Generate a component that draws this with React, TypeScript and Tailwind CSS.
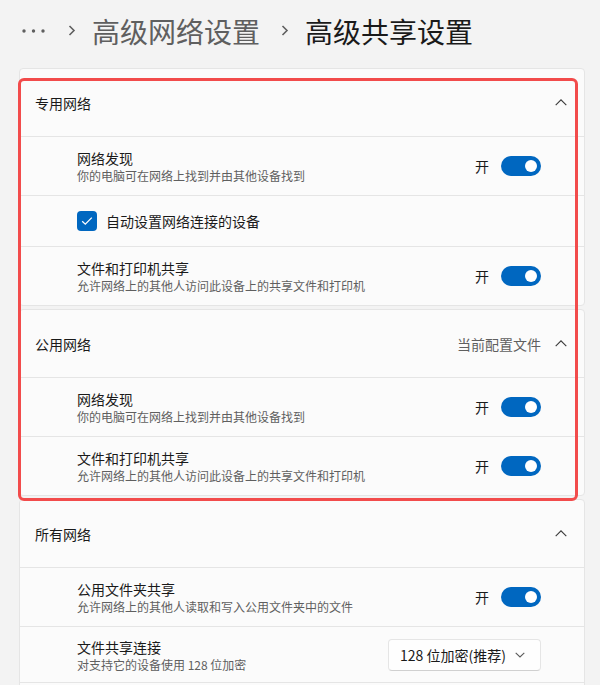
import React from "react";

const font = { fontFamily: '"Noto Sans CJK SC", "Noto Sans", sans-serif' };

function ChevronUp() {
  return (
    <svg width="12" height="7" viewBox="0 0 12 7" className="block">
      <path d="M0.7 6.2 L6 0.9 L11.3 6.2" fill="none" stroke="#3a3a3a" strokeWidth="1.1" />
    </svg>
  );
}

function ChevronDown() {
  return (
    <svg width="10" height="6" viewBox="0 0 10 6" className="block">
      <path d="M0.7 0.8 L5 5 L9.3 0.8" fill="none" stroke="#5a5a5a" strokeWidth="1.1" />
    </svg>
  );
}

function BreadChevron() {
  return (
    <svg width="8" height="11" viewBox="0 0 8 11" className="block">
      <path d="M1.5 1 L6 5.5 L1.5 10" fill="none" stroke="#5f5f5f" strokeWidth="1.6" />
    </svg>
  );
}

function Toggle() {
  return (
    <div className="flex items-center gap-[12px]">
      <span className="text-[14px] leading-[20px] text-[#1a1a1a]">开</span>
      <div className="w-[40px] h-[20px] rounded-full bg-[#0067c0] flex items-center justify-end pr-[4px]">
        <div className="w-[12px] h-[12px] rounded-full bg-white" />
      </div>
    </div>
  );
}

function Header({ title, extra }: { title: string; extra?: string }) {
  return (
    <div className="h-[67px] flex items-center pl-[15px] pr-[17px]">
      <span className="flex-1 text-[14px] leading-[20px] text-[#1a1a1a]">{title}</span>
      {extra && <span className="text-[14px] leading-[20px] text-[#5f5f5f] mr-[14px]">{extra}</span>}
      <ChevronUp />
    </div>
  );
}

function ToggleRow({ title, desc }: { title: string; desc: string }) {
  return (
    <div className="h-[59px] border-t border-[#e5e5e5] flex items-center pl-[57px] pr-[43px]">
      <div className="flex-1 flex flex-col">
        <span className="text-[14px] leading-[20px] text-[#1a1a1a]">{title}</span>
        <span className="text-[12px] leading-[16px] text-[#5f5f5f]">{desc}</span>
      </div>
      <Toggle />
    </div>
  );
}

export default function App() {
  return (
    <div className="w-[600px] h-[685px] overflow-hidden bg-[#f3f3f3]" style={font}>
      <div className="h-[61px] flex items-center pl-[22px]">
        <svg width="24" height="4" viewBox="0 0 24 4" className="block">
          <circle cx="2" cy="2" r="1.7" fill="#5f5f5f" />
          <circle cx="11.5" cy="2" r="1.7" fill="#5f5f5f" />
          <circle cx="21" cy="2" r="1.7" fill="#5f5f5f" />
        </svg>
        <div className="ml-[22px]">
          <BreadChevron />
        </div>
        <span className="ml-[16px] text-[28px] leading-[36px] text-[#5f5f5f]">高级网络设置</span>
        <div className="ml-[21px]">
          <BreadChevron />
        </div>
        <span className="ml-[16px] text-[28px] leading-[36px] text-[#1a1a1a]">高级共享设置</span>
      </div>

      <div className="relative mt-[7px] ml-[19px] mr-[15px] flex flex-col gap-[3px]">
        <div className="bg-[#fbfbfb] border border-[#e5e5e5] rounded-[4px]">
          <Header title="专用网络" />
          <ToggleRow title="网络发现" desc="你的电脑可在网络上找到并由其他设备找到" />
          <div className="h-[51px] border-t border-[#e5e5e5] flex items-center pl-[57px]">
            <div className="w-[20px] h-[20px] rounded-[4px] bg-[#0067c0] flex items-center justify-center">
              <svg width="12" height="10" viewBox="0 0 12 10" className="block">
                <path d="M1.2 5.2 L4.3 8.2 L10.8 1.6" fill="none" stroke="#ffffff" strokeWidth="1.3" />
              </svg>
            </div>
            <span className="ml-[9px] text-[14px] leading-[20px] text-[#1a1a1a]">自动设置网络连接的设备</span>
          </div>
          <ToggleRow title="文件和打印机共享" desc="允许网络上的其他人访问此设备上的共享文件和打印机" />
        </div>

        <div className="bg-[#fbfbfb] border border-[#e5e5e5] rounded-[4px]">
          <Header title="公用网络" extra="当前配置文件" />
          <ToggleRow title="网络发现" desc="你的电脑可在网络上找到并由其他设备找到" />
          <ToggleRow title="文件和打印机共享" desc="允许网络上的其他人访问此设备上的共享文件和打印机" />
        </div>

        <div className="bg-[#fbfbfb] border border-[#e5e5e5] rounded-[4px]">
          <Header title="所有网络" />
          <ToggleRow title="公用文件夹共享" desc="允许网络上的其他人读取和写入公用文件夹中的文件" />
          <div className="h-[56px] border-t border-[#e5e5e5] flex items-center pl-[57px] pr-[43px]">
            <div className="flex-1 flex flex-col">
              <span className="text-[14px] leading-[20px] text-[#1a1a1a]">文件共享连接</span>
              <span className="text-[12px] leading-[16px] text-[#5f5f5f]">对支持它的设备使用 128 位加密</span>
            </div>
            <div className="w-[153px] h-[32px] rounded-[4px] bg-[#fefefe] border border-[#e5e5e5] border-b-[#d0d0d0] flex items-center pl-[11px] pr-[15px]">
              <span className="flex-1 text-[14px] leading-[20px] text-[#1a1a1a]">128 位加密(推荐)</span>
              <ChevronDown />
            </div>
          </div>
          <div className="h-[58px] border-t border-[#e5e5e5]" />
        </div>

        <div className="absolute left-[-1px] top-[10px] w-[560px] h-[423px] border-[3px] border-[#f24b4b] rounded-[6px] pointer-events-none" />
      </div>
    </div>
  );
}
